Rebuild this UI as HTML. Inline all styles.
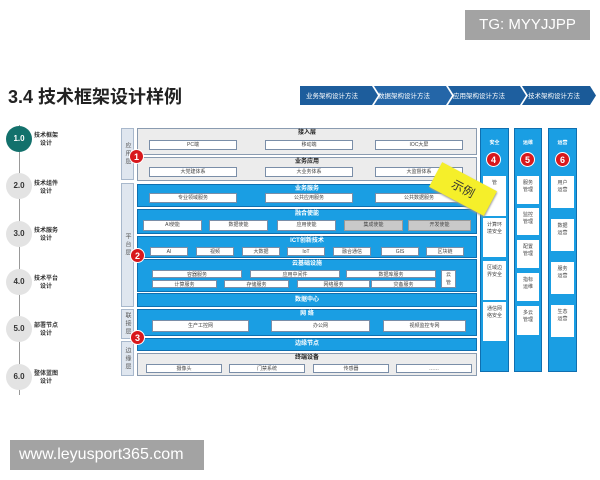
<!DOCTYPE html>
<html><head><meta charset="utf-8"><style>
*{margin:0;padding:0;box-sizing:border-box}
body{width:600px;height:480px;background:#fff;position:relative;overflow:hidden;font-family:"Liberation Sans","Noto Sans CJK SC",sans-serif;}
.a{position:absolute}
.tg{left:465px;top:10px;width:125px;height:30px;background:#a3a3a3;color:#fff;font-size:15px;line-height:30px;text-align:center}
.wm{left:10px;top:440px;width:194px;height:30px;background:#a3a3a3;color:#fff;font-size:16px;line-height:30px;padding-left:9px}
.title{left:8px;top:83px;font-size:18px;font-weight:bold;color:#222}
.circ{width:26px;height:26px;border-radius:50%;background:#e3e3e3;color:#333;font-size:8px;font-weight:bold;text-align:center;line-height:26px}
.lbl{font-size:6px;color:#333;text-align:center;line-height:8px;font-weight:bold}
.side{background:#dfe6ef;border:1px solid #a8b8cc;font-size:6px;color:#555;text-align:center;display:flex;align-items:center;justify-content:center;writing-mode:vertical-rl;letter-spacing:2px}
.g{background:#ececec;border:1px solid #8a9bb0}
.b{background:#1a9ee3;border:1px solid #0f6fb0}
.h{font-size:6px;font-weight:bold;text-align:center;line-height:9px}
.w{background:#fff;border:1px solid #7a8ea8;font-size:5px;text-align:center;color:#444;line-height:8px}
.gr{background:#c9c9c9;border:1px solid #999;font-size:5px;text-align:center;color:#444;line-height:8px}
.red{width:15px;height:15px;border-radius:50%;background:#d8181c;color:#fff;font-size:9px;font-weight:bold;text-align:center;line-height:15px;border:1px solid #fff}
.col{background:#1a9ee3;border:1px solid #0f6fb0}
.cb{background:#fff;font-size:5px;color:#444;text-align:center;line-height:7px;padding-top:4px}
</style></head><body>
<div class="a tg">TG: MYYJJPP</div>
<div class="a title">3.4 技术框架设计样例</div>
<svg class="a" style="left:300px;top:86px" width="298" height="19">
<polygon points="0,0 72,0 78,9.5 72,19 0,19" fill="#1d5d9c"/>
<polygon points="74,0 146,0 152,9.5 146,19 74,19 80,9.5" fill="#2466a8"/>
<polygon points="148,0 220,0 226,9.5 220,19 148,19 154,9.5" fill="#1e5f9f"/>
<polygon points="222,0 290,0 296,9.5 290,19 222,19 228,9.5" fill="#1a5a98"/>
<g fill="#fff" font-size="6.5" font-family="Liberation Sans,Noto Sans CJK SC,sans-serif">
<text x="6" y="12">业务架构设计方法</text><text x="78" y="12">数据架构设计方法</text><text x="153" y="12">应用架构设计方法</text><text x="228" y="12">技术架构设计方法</text></g>
</svg>
<div class="a" style="left:19px;top:125px;width:1px;height:270px;background:#999"></div>
<div class="a circ" style="left:6px;top:126px;background:#13716c;color:#fff">1.0</div>
<div class="a circ" style="left:6px;top:173px">2.0</div>
<div class="a circ" style="left:6px;top:221px">3.0</div>
<div class="a circ" style="left:6px;top:269px">4.0</div>
<div class="a circ" style="left:6px;top:316px">5.0</div>
<div class="a circ" style="left:6px;top:364px">6.0</div>
<div class="a lbl" style="left:34px;top:132px">技术框架<br>设计</div>
<div class="a lbl" style="left:34px;top:180px">技术组件<br>设计</div>
<div class="a lbl" style="left:34px;top:227px">技术服务<br>设计</div>
<div class="a lbl" style="left:34px;top:275px">技术平台<br>设计</div>
<div class="a lbl" style="left:34px;top:322px">部署节点<br>设计</div>
<div class="a lbl" style="left:34px;top:370px">整体蓝图<br>设计</div>

<div class="a side" style="left:121px;top:128px;width:13px;height:52px">应用层</div>
<div class="a side" style="left:121px;top:183px;width:13px;height:124px">平台层</div>
<div class="a side" style="left:121px;top:309px;width:13px;height:30px">联接层</div>
<div class="a side" style="left:121px;top:341px;width:13px;height:35px">边缘层</div>

<div class="a g" style="left:137px;top:128px;width:340px;height:27px"><div class="h" style="color:#222">接入层</div></div>
<div class="a w" style="left:149px;top:140px;width:88px;height:10px">PC端</div>
<div class="a w" style="left:265px;top:140px;width:88px;height:10px">移动端</div>
<div class="a w" style="left:375px;top:140px;width:88px;height:10px">IOC大屏</div>
<div class="a g" style="left:137px;top:157px;width:340px;height:24px"><div class="h" style="color:#222">业务应用</div></div>
<div class="a w" style="left:149px;top:167px;width:88px;height:10px">大党建体系</div>
<div class="a w" style="left:265px;top:167px;width:88px;height:10px">大业务体系</div>
<div class="a w" style="left:375px;top:167px;width:88px;height:10px">大监督体系</div>

<div class="a b" style="left:137px;top:184px;width:340px;height:23px"><div class="h" style="color:#fff">业务服务</div></div>
<div class="a w" style="left:149px;top:193px;width:88px;height:10px">专业领域服务</div>
<div class="a w" style="left:265px;top:193px;width:88px;height:10px">公共应用服务</div>
<div class="a w" style="left:375px;top:193px;width:88px;height:10px">公共数据服务</div>

<div class="a b" style="left:137px;top:209px;width:340px;height:25px"><div class="h" style="color:#fff">融合使能</div></div>
<div class="a w" style="left:143px;top:220px;width:59px;height:11px">AI使能</div>
<div class="a w" style="left:209px;top:220px;width:59px;height:11px">数据使能</div>
<div class="a w" style="left:277px;top:220px;width:59px;height:11px">应用使能</div>
<div class="a gr" style="left:344px;top:220px;width:59px;height:11px">集成使能</div>
<div class="a gr" style="left:408px;top:220px;width:63px;height:11px">开发使能</div>

<div class="a b" style="left:137px;top:236px;width:340px;height:22px"><div class="h" style="color:#fff">ICT创新技术</div></div>
<div class="a w" style="left:150px;top:247px;width:38px;height:9px">AI</div>
<div class="a w" style="left:196px;top:247px;width:38px;height:9px">视频</div>
<div class="a w" style="left:242px;top:247px;width:38px;height:9px">大数据</div>
<div class="a w" style="left:287px;top:247px;width:38px;height:9px">IoT</div>
<div class="a w" style="left:333px;top:247px;width:38px;height:9px">融合通信</div>
<div class="a w" style="left:381px;top:247px;width:38px;height:9px">GIS</div>
<div class="a w" style="left:426px;top:247px;width:38px;height:9px">区块链</div>

<div class="a b" style="left:137px;top:259px;width:340px;height:33px"><div class="h" style="color:#fff">云基础设施</div></div>
<div class="a w" style="left:152px;top:270px;width:90px;height:8px">容器服务</div>
<div class="a w" style="left:250px;top:270px;width:90px;height:8px">应用中间件</div>
<div class="a w" style="left:346px;top:270px;width:90px;height:8px">数据库服务</div>
<div class="a w" style="left:152px;top:280px;width:65px;height:8px">计算服务</div>
<div class="a w" style="left:224px;top:280px;width:65px;height:8px">存储服务</div>
<div class="a w" style="left:297px;top:280px;width:73px;height:8px">网络服务</div>
<div class="a w" style="left:371px;top:280px;width:65px;height:8px">灾备服务</div>
<div class="a w" style="left:441px;top:270px;width:15px;height:18px;line-height:8px">云<br>管</div>

<div class="a b" style="left:137px;top:293px;width:340px;height:14px"><div class="h" style="color:#fff;line-height:12px">数据中心</div></div>
<div class="a b" style="left:137px;top:309px;width:340px;height:27px"><div class="h" style="color:#fff">网 络</div></div>
<div class="a w" style="left:152px;top:320px;width:97px;height:12px;line-height:10px">生产工控网</div>
<div class="a w" style="left:271px;top:320px;width:99px;height:12px;line-height:10px">办公网</div>
<div class="a w" style="left:383px;top:320px;width:83px;height:12px;line-height:10px">视频监控专网</div>
<div class="a b" style="left:137px;top:338px;width:340px;height:13px"><div class="h" style="color:#fff;line-height:11px">边缘节点</div></div>
<div class="a g" style="left:137px;top:353px;width:340px;height:23px"><div class="h" style="color:#222">终端设备</div></div>
<div class="a w" style="left:146px;top:364px;width:76px;height:9px">摄像头</div>
<div class="a w" style="left:229px;top:364px;width:76px;height:9px">门禁系统</div>
<div class="a w" style="left:313px;top:364px;width:76px;height:9px">传感器</div>
<div class="a w" style="left:396px;top:364px;width:76px;height:9px">……</div>

<div class="a col" style="left:480px;top:128px;width:29px;height:244px"></div>
<div class="a col" style="left:514px;top:128px;width:28px;height:244px"></div>
<div class="a col" style="left:548px;top:128px;width:29px;height:244px"></div>
<div class="a h" style="left:480px;top:139px;width:29px;color:#fff;font-size:5px">安全</div>
<div class="a h" style="left:514px;top:139px;width:28px;color:#fff;font-size:5px">运维</div>
<div class="a h" style="left:548px;top:139px;width:29px;color:#fff;font-size:5px">运营</div>
<div class="a red" style="left:486px;top:152px">4</div>
<div class="a red" style="left:520px;top:152px">5</div>
<div class="a red" style="left:555px;top:152px">6</div>
<div class="a cb" style="left:483px;top:176px;width:23px;height:40px">管</div>
<div class="a cb" style="left:483px;top:218px;width:23px;height:39px">计算环<br>境安全</div>
<div class="a cb" style="left:483px;top:261px;width:23px;height:39px">区域边<br>界安全</div>
<div class="a cb" style="left:483px;top:302px;width:23px;height:39px">通信网<br>络安全</div>
<div class="a cb" style="left:517px;top:176px;width:22px;height:28px">服务<br>管理</div>
<div class="a cb" style="left:517px;top:208px;width:22px;height:27px">监控<br>管理</div>
<div class="a cb" style="left:517px;top:240px;width:22px;height:28px">配置<br>管理</div>
<div class="a cb" style="left:517px;top:273px;width:22px;height:28px">指标<br>运维</div>
<div class="a cb" style="left:517px;top:306px;width:22px;height:29px">多云<br>管理</div>
<div class="a cb" style="left:551px;top:176px;width:23px;height:32px">用户<br>运营</div>
<div class="a cb" style="left:551px;top:219px;width:23px;height:32px">数据<br>运营</div>
<div class="a cb" style="left:551px;top:262px;width:23px;height:32px">服务<br>运营</div>
<div class="a cb" style="left:551px;top:305px;width:23px;height:32px">生态<br>运营</div>

<div class="a" style="left:432px;top:175px;width:62px;height:28px;background:#f5ef2a;transform:rotate(28deg);font-size:12px;color:#333;text-align:center;line-height:28px;box-shadow:1px 1px 2px #999">示例</div>

<div class="a red" style="left:129px;top:149px">1</div>
<div class="a red" style="left:130px;top:248px">2</div>
<div class="a red" style="left:130px;top:330px">3</div>

<div class="a wm">www.leyusport365.com</div>
</body></html>
